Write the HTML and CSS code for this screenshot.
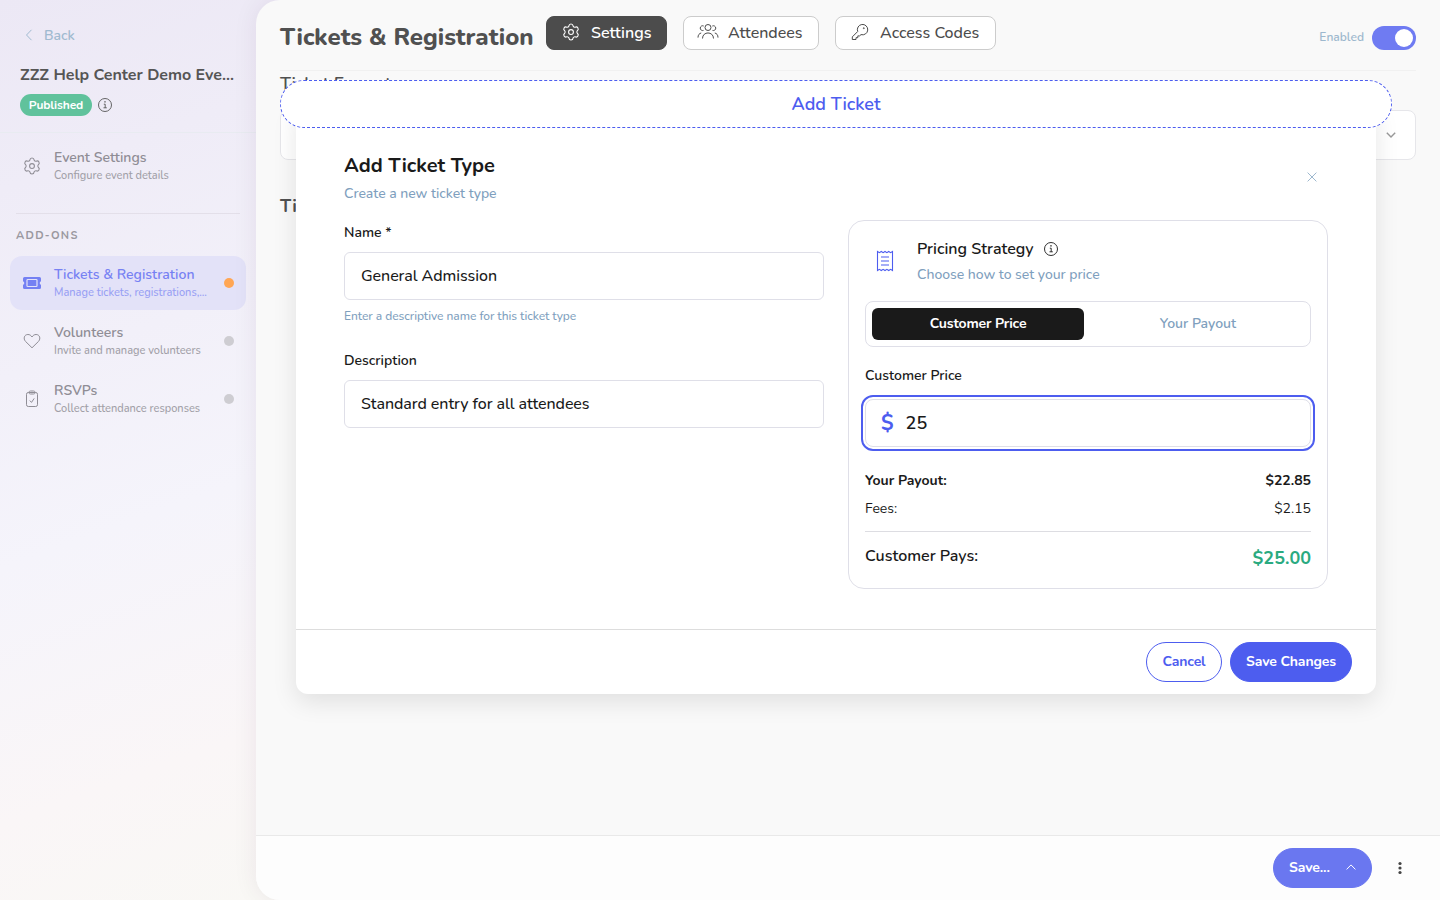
FILE: index.html
```html
<!DOCTYPE html>
<html lang="en">
<head>
    <meta charset="UTF-8">
    <meta name="viewport" content="width=device-width, initial-scale=1.0">
    <title>Tickets &amp; Registration</title>
    <link rel="stylesheet" href="styles.css">
</head>
<body>
    <!-- shared icons -->
    <svg class="sprite" width="0" height="0">
        <symbol id="gear" viewBox="0 0 24 24">
            <path d="M9.5 4.8C9.7 1.6 14.3 1.6 14.5 4.8Q15.2 6.46 17 6.25C19.85 4.8 22.15 8.8 19.5 10.55Q18.4 12 19.5 13.45C22.15 15.2 19.85 19.2 17 17.75Q15.2 17.54 14.5 19.2C14.3 22.4 9.7 22.4 9.5 19.2Q8.8 17.54 7 17.75C4.15 19.2 1.85 15.2 4.5 13.45Q5.6 12 4.5 10.55C1.85 8.8 4.15 4.8 7 6.25Q8.8 6.46 9.5 4.8z"/>
            <circle cx="12" cy="12" r="2.9"/>
        </symbol>
        <symbol id="info" viewBox="0 0 16 16">
            <circle cx="8" cy="8" r="6.5"/>
            <path d="M6.8 7.2h1.4v3.6M6.5 10.8h3.3"/>
            <circle cx="8" cy="4.9" r=".4"/>
        </symbol>
    </svg>

    <div class="app">
        <aside class="sidebar">
            <a class="back">
                <svg class="icon" width="8" height="12" viewBox="0 0 8 12"><path d="M6.5.8L1.5 6l5 5.2"/></svg>
                <span>Back</span>
            </a>
            <div class="event-name">ZZZ Help Center Demo Eve...</div>
            <div class="event-status">
                <span class="badge">Published</span>
                <svg class="icon info" width="16" height="16"><use href="#info"/></svg>
            </div>
            <nav class="nav nav-top">
                <a class="nav-item">
                    <svg class="icon nav-icon gear" width="20" height="20"><use href="#gear"/></svg>
                    <div class="nav-text">
                        <div class="nav-title">Event Settings</div>
                        <div class="nav-sub">Configure event details</div>
                    </div>
                </a>
            </nav>
            <div class="nav-heading">ADD-ONS</div>
            <nav class="nav">
                <a class="nav-item active">
                    <svg class="nav-icon" width="20" height="20" viewBox="0 0 20 20">
                        <path class="fill" d="M2.5 4h15a1.5 1.5 0 0 1 1.5 1.5v2.7a1.9 1.9 0 0 0 0 3.6v2.7a1.5 1.5 0 0 1-1.5 1.5h-15A1.5 1.5 0 0 1 1 14.5v-2.7a1.9 1.9 0 0 0 0-3.6V5.5A1.5 1.5 0 0 1 2.5 4z"/>
                        <rect class="cut" x="5" y="6.5" width="10" height="7" rx=".8"/>
                    </svg>
                    <div class="nav-text">
                        <div class="nav-title">Tickets &amp; Registration</div>
                        <div class="nav-sub">Manage tickets, registrations,...</div>
                    </div>
                    <span class="dot"></span>
                </a>
                <a class="nav-item">
                    <svg class="icon nav-icon" width="20" height="20" viewBox="0 0 20 20"><path d="M10 16.800L3.500 10.400C.9 7.500 2.400 3.500 5.900 3.500c1.800 0 3.100.9 4.100 2.500 1-1.600 2.300-2.500 4.100-2.500 3.500 0 5 4 2.400 6.900z"/></svg>
                    <div class="nav-text">
                        <div class="nav-title">Volunteers</div>
                        <div class="nav-sub">Invite and manage volunteers</div>
                    </div>
                    <span class="dot"></span>
                </a>
                <a class="nav-item">
                    <svg class="icon nav-icon" width="20" height="20" viewBox="0 0 20 20">
                        <rect x="4.5" y="3.5" width="11" height="14" rx="1.8"/>
                        <path d="M7 3.500c0-1 .5-1.500 1.500-1.500h3c1 0 1.500.5 1.500 1.500S12.500 5 11.500 5h-3C7.500 5 7 4.500 7 3.500zM7.800 11.600l1.700 1.800 2.700-4"/>
                    </svg>
                    <div class="nav-text">
                        <div class="nav-title">RSVPs</div>
                        <div class="nav-sub">Collect attendance responses</div>
                    </div>
                    <span class="dot"></span>
                </a>
            </nav>
        </aside>

        <main class="main">
            <div class="content">
                <header class="page-header">
                    <h1>Tickets &amp; Registration</h1>
                    <div class="tabs">
                        <a class="tab selected">
                            <svg class="icon gear" width="20" height="20"><use href="#gear"/></svg>
                            <span>Settings</span>
                        </a>
                        <a class="tab tab-attendees">
                            <svg class="icon" width="22" height="20" viewBox="0 0 22 20">
                                <circle cx="11" cy="5.500" r="3"/>
                                <path d="M5.500 16.500c0-7.400 11-7.400 11 0M6.500 8.400A2.400 2.400 0 1 1 6.700 4M15.500 8.400A2.400 2.400 0 1 0 15.300 4M1 15.600c0-2.700 1.300-4.200 3.200-4.600M21 15.600c0-2.700-1.300-4.200-3.200-4.600"/>
                            </svg>
                            <span>Attendees</span>
                        </a>
                        <a class="tab tab-codes">
                            <svg class="icon" width="20" height="20" viewBox="0 0 20 20">
                                <path d="M7.700 9.500a5.200 5.200 0 1 1 3.300 3.100l-1.400 1.300H7.800v1.800H6v1.800H2.300v-2.600z"/>
                                <circle cx="13.800" cy="6.200" r=".5"/>
                            </svg>
                            <span>Access Codes</span>
                        </a>
                    </div>
                    <div class="enable">
                        <span>Enabled</span>
                        <div class="switch"><div class="knob"></div></div>
                    </div>
                </header>
                <h3 class="section-title format">Ticket Format</h3>
                <div class="select-box">
                    <svg class="icon" width="10" height="6" viewBox="0 0 10 6"><path d="M.8.8L5 5 9.200.8"/></svg>
                </div>
                <h3 class="section-title second">Tickets</h3>
            </div>
            <footer class="page-footer">
                <button class="btn btn-save">
                    <span>Save...</span>
                    <svg class="icon" width="10" height="6" viewBox="0 0 10 6"><path d="M.6 5.400L5 .9l4.400 4.500"/></svg>
                </button>
                <svg class="more" width="4" height="14" viewBox="0 0 4 14">
                    <circle cx="2" cy="2.500" r="1.600"/>
                    <circle cx="2" cy="7" r="1.600"/>
                    <circle cx="2" cy="11.500" r="1.600"/>
                </svg>
            </footer>
        </main>
    </div>

    <div class="modal">
        <div class="modal-body">
            <div class="modal-head">
                <div>
                    <h2>Add Ticket Type</h2>
                    <p class="muted">Create a new ticket type</p>
                </div>
                <svg class="icon close" width="10" height="10" viewBox="0 0 10 10"><path d="M.6.600l8.800 8.800M9.400.600L.6 9.400"/></svg>
            </div>
            <div class="columns">
                <div class="form">
                    <label for="name">Name *</label>
                    <input id="name" class="field" type="text" value="General Admission">
                    <p class="help">Enter a descriptive name for this ticket type</p>
                    <label for="desc">Description</label>
                    <input id="desc" class="field" type="text" value="Standard entry for all attendees">
                </div>
                <div class="card">
                    <div class="card-head">
                        <svg class="icon receipt" width="18" height="22" viewBox="0 0 18 22">
                            <path d="M1.500 1.500l1.900 1.200 1.900-1.200 1.800 1.200L9 1.500l1.900 1.200 1.800-1.200 1.900 1.200 1.900-1.200v19l-1.900-1.200-1.900 1.200-1.800-1.200L9 20.500l-1.900-1.200-1.800 1.200-1.900-1.200-1.900 1.200zM5 7h8M5 11h8M5 15h8"/>
                        </svg>
                        <div>
                            <div class="card-title">
                                <span>Pricing Strategy</span>
                                <svg class="icon info" width="16" height="16"><use href="#info"/></svg>
                            </div>
                            <p class="muted">Choose how to set your price</p>
                        </div>
                    </div>
                    <div class="segment">
                        <button class="on">Customer Price</button>
                        <button class="off">Your Payout</button>
                    </div>
                    <label for="price">Customer Price</label>
                    <div class="price">
                        <span class="currency">$</span>
                        <input id="price" type="text" value="25">
                    </div>
                    <div class="row bold"><span>Your Payout:</span><span>$22.85</span></div>
                    <div class="row"><span>Fees:</span><span>$2.15</span></div>
                    <div class="total"><span>Customer Pays:</span><span class="amount">$25.00</span></div>
                </div>
            </div>
        </div>
        <div class="modal-footer">
            <button class="btn btn-outline">Cancel</button>
            <button class="btn btn-primary">Save Changes</button>
        </div>
    </div>
    <button class="add-ticket">Add Ticket</button>
</body>
</html>
```
FILE: styles.css
```css
* {
    box-sizing: border-box;
}
body {
    margin: 0;
    font-family: Nunito, Lato, sans-serif;
    font-size: 14px;
    color: #1a1a1a;
    background: #f6f4fa;
    height: 900px;
    overflow: hidden;
}
h1, h2, h3, p {
    margin: 0;
}
button, input {
    font-family: inherit;
    color: inherit;
}
.sprite {
    position: absolute;
}
.icon {
    fill: none;
    stroke: currentColor;
    stroke-width: 1;
    flex-shrink: 0;
}
.gear {
    stroke-width: 1.3;
}
.info {
    stroke-width: 0.9;
}
.app {
    display: flex;
    height: 900px;
    background: linear-gradient(160deg, #ece8f5 0%, #f5f4fb 40%, #faf6f7 58%, #f9f8f5 70%);
}

/* sidebar */
.sidebar {
    width: 256px;
    color: #555;
}
.back {
    display: flex;
    align-items: center;
    gap: 11px;
    height: 20px;
    margin: 25px 0 0 25px;
    color: #a0bad0;
    font-weight: 600;
}
.event-name {
    margin: 18px 0 0 20px;
    font-size: 16px;
    line-height: 24px;
    font-weight: 700;
    white-space: nowrap;
}
.event-status {
    display: flex;
    align-items: center;
    gap: 5px;
    height: 39px;
    padding: 0 0 16px 20px;
    margin-top: 7px;
    border-bottom: 1px solid #e8ebf1;
}
.badge {
    width: 72px;
    line-height: 22px;
    border-radius: 11px;
    background: #60c29c;
    color: white;
    font-size: 12px;
    font-weight: 700;
    letter-spacing: -0.1px;
    text-align: center;
}
.nav {
    display: flex;
    flex-direction: column;
    gap: 4px;
    padding: 0 10px;
}
.nav-top {
    margin: 6px 16px 0;
    padding: 0 0 20px;
    border-bottom: 1px solid #e3dfe9;
}
.nav-top .nav-item {
    margin: 0 -6px;
}
.nav-heading {
    margin: 14px 0 12px 16px;
    font-size: 11px;
    line-height: 16px;
    font-weight: 700;
    letter-spacing: 1.3px;
    color: #9a98a0;
}
.nav-item {
    display: flex;
    align-items: center;
    gap: 12px;
    height: 54px;
    padding: 0 12px;
    border-radius: 12px;
    color: #8f8d95;
}
.nav-icon {
    flex-shrink: 0;
}
.nav-text {
    flex: 1;
    white-space: nowrap;
}
.nav-title {
    font-size: 14px;
    line-height: 20px;
    font-weight: 600;
}
.nav-sub {
    font-size: 11px;
    line-height: 16px;
    color: #a19fa7;
    font-weight: 500;
}
.active {
    background: #e3e2f8;
    color: #7781f3;
}
.active .nav-sub {
    color: #989ff4;
}
.fill {
    fill: #7480f3;
}
.cut {
    fill: none;
    stroke: #e3e2f8;
    stroke-width: 1.2;
}
.dot {
    flex-shrink: 0;
    width: 10px;
    height: 10px;
    border-radius: 50%;
    background: #cecdd2;
}
.active .dot {
    background: #ffa654;
}

/* main panel */
.main {
    flex: 1;
    display: flex;
    flex-direction: column;
    border-radius: 24px 0 0 24px;
    background: #f9f9f9;
    box-shadow: 0 0 24px rgba(60, 30, 60, 0.08);
    overflow: hidden;
}
.content {
    flex: 1;
    padding: 0 24px;
}
.page-header {
    display: flex;
    height: 71px;
    border-bottom: 1px solid #f1f1f1;
}
h1 {
    width: 254px;
    margin-right: 12px;
    font-size: 24px;
    line-height: 74px;
    font-weight: 800;
    color: #505050;
    white-space: nowrap;
}
.tabs {
    display: flex;
    gap: 16px;
    padding-top: 16px;
}
.tab {
    display: flex;
    align-items: center;
    gap: 10px;
    height: 34px;
    width: 121px;
    padding-left: 14px;
    border: 1px solid #ccc;
    border-radius: 8px;
    background: white;
    color: #4c4c4c;
    font-size: 16px;
    font-weight: 500;
    white-space: nowrap;
}
.tab .icon {
    margin-top: -2px;
}
.tab.selected {
    background: #4c4c4c;
    border-color: #4c4c4c;
    color: white;
    font-weight: 600;
}
.tab-attendees {
    width: 136px;
    padding-left: 13px;
    gap: 9px;
}
.tab-codes {
    width: 161px;
}
.enable {
    display: flex;
    align-items: center;
    gap: 8px;
    height: 24px;
    margin: 26px 0 0 auto;
    font-size: 12px;
    line-height: 16px;
    font-weight: 600;
    color: #9db8ce;
}
.enable span {
    margin-top: -2px;
}
.switch {
    width: 44px;
    height: 24px;
    padding: 3px;
    border-radius: 12px;
    background: #6f7bf2;
}
.knob {
    width: 18px;
    height: 18px;
    margin-left: auto;
    border-radius: 50%;
    background: white;
}
.section-title {
    margin-top: 1px;
    font-size: 18px;
    line-height: 24px;
    font-weight: 700;
    color: #505050;
}
.format {
    font-weight: 600;
    letter-spacing: -0.1px;
}
.select-box {
    display: flex;
    align-items: center;
    justify-content: flex-end;
    height: 50px;
    margin-top: 14px;
    padding-right: 19px;
    border: 1px solid #e6e6ea;
    border-radius: 8px;
    background: white;
    color: #999;
}
.select-box .icon {
    stroke-width: 1.4;
}
.second {
    margin-top: 34px;
}
.page-footer {
    display: flex;
    align-items: center;
    justify-content: flex-end;
    height: 65px;
    padding-right: 38px;
    border-top: 1px solid #e9e9e9;
    background: #fdfdfd;
}
.more {
    margin: -1px 0 0 26px;
    fill: #444;
}

/* buttons */
.btn {
    height: 40px;
    padding: 0 0 2px;
    border: 1px solid #4d5def;
    border-radius: 20px;
    font-size: 14px;
    font-weight: 700;
    letter-spacing: -0.13px;
    cursor: pointer;
}
.btn-save {
    display: flex;
    align-items: center;
    justify-content: space-between;
    width: 99px;
    padding: 0 15px 2px;
    background: #6a77f0;
    border-color: #6a77f0;
    color: white;
}
.btn-outline {
    width: 76px;
    background: white;
    color: #4d5def;
}
.btn-primary {
    width: 122px;
    background: #4d5def;
    color: white;
}
.add-ticket {
    position: absolute;
    left: 280px;
    top: 80px;
    width: 1112px;
    height: 48px;
    border: 1px dashed #4d5def;
    border-radius: 24px;
    background: white;
    color: #4d5def;
    font-size: 18px;
    font-weight: 600;
}

/* modal */
.modal {
    position: absolute;
    left: 296px;
    top: 104px;
    width: 1080px;
    height: 590px;
    display: flex;
    flex-direction: column;
    border-radius: 12px;
    background: white;
    box-shadow: 0 8px 24px rgba(0, 0, 0, 0.1);
}
.modal-body {
    flex: 1;
    padding: 47px 48px 0;
}
.modal-head {
    display: flex;
    justify-content: space-between;
    align-items: center;
    height: 53px;
    margin-bottom: 16px;
}
h2 {
    font-size: 20px;
    line-height: 28px;
    font-weight: 700;
}
.muted {
    margin-top: 4px;
    line-height: 20px;
    font-weight: 500;
    letter-spacing: -0.04px;
    color: #7f9fbe;
}
.close {
    margin: -1px 11px 0 0;
    color: #9db8ce;
}
.columns {
    display: grid;
    grid-template-columns: 1fr 1fr;
    gap: 24px;
    align-items: start;
}
label {
    display: block;
    padding-top: 1px;
    line-height: 24px;
    font-weight: 600;
}
.field {
    display: block;
    width: 100%;
    height: 48px;
    margin-top: 7px;
    padding: 0 16px;
    border: 1px solid #dfdfe8;
    border-radius: 6px;
    font-size: 16px;
    font-weight: 500;
    letter-spacing: -0.07px;
}
.help {
    margin: 8px 0 24px;
    font-size: 12px;
    line-height: 16px;
    font-weight: 500;
    letter-spacing: -0.05px;
    color: #7f9fbe;
}
.card {
    height: 369px;
    padding: 16px;
    border: 1px solid #dfdfe8;
    border-radius: 16px;
}
.card-head {
    display: flex;
    align-items: center;
    gap: 23px;
    height: 47px;
    padding-left: 11px;
    color: #4d5def;
}
.receipt {
    stroke-width: 1.1;
}
.card-title {
    display: flex;
    align-items: center;
    gap: 9px;
    line-height: 24px;
    font-size: 16px;
    font-weight: 600;
    color: #1a1a1a;
}
.card-head .muted {
    padding-top: 1px;
    margin-bottom: -1px;
    margin-top: 3px;
}
.segment {
    display: grid;
    grid-template-columns: 1fr 1fr;
    gap: 8px;
    margin: 17px 0 16px;
    padding: 6px;
    border: 1px solid #dfdfe8;
    border-radius: 8px;
}
.segment button {
    height: 32px;
    padding: 0 0 2px;
    border: 0;
    border-radius: 6px;
    background: none;
    font-size: 14px;
    font-weight: 700;
    letter-spacing: -0.15px;
}
.segment .on {
    background: #1a1a1a;
    color: white;
}
.segment .off {
    color: #7f9fbe;
    font-weight: 600;
    letter-spacing: 0;
}
.price {
    display: flex;
    align-items: center;
    gap: 12px;
    height: 48px;
    margin: 11px 0 24px;
    padding: 0 15px;
    border: 1px solid #dfdfe8;
    border-radius: 8px;
    outline: 2px solid #4d5def;
    outline-offset: 2px;
}
.currency {
    font-size: 21px;
    font-weight: 700;
    color: #4d5def;
}
.price input {
    flex: 1;
    padding: 0;
    border: 0;
    outline: none;
    background: none;
    font-size: 18px;
    font-weight: 600;
}
.row {
    display: flex;
    justify-content: space-between;
    margin-bottom: 8px;
    line-height: 20px;
}
.bold {
    font-weight: 700;
}
.total {
    display: flex;
    justify-content: space-between;
    margin-top: 12px;
    padding-top: 12px;
    border-top: 1px solid #dddde2;
    font-size: 16px;
    line-height: 24px;
    font-weight: 600;
}
.amount {
    padding-top: 2px;
    font-size: 18px;
    font-weight: 700;
    color: #2aaa80;
}
.modal-footer {
    display: flex;
    align-items: center;
    justify-content: flex-end;
    gap: 8px;
    height: 65px;
    padding-right: 24px;
    border-top: 1px solid #ddd;
}
```
